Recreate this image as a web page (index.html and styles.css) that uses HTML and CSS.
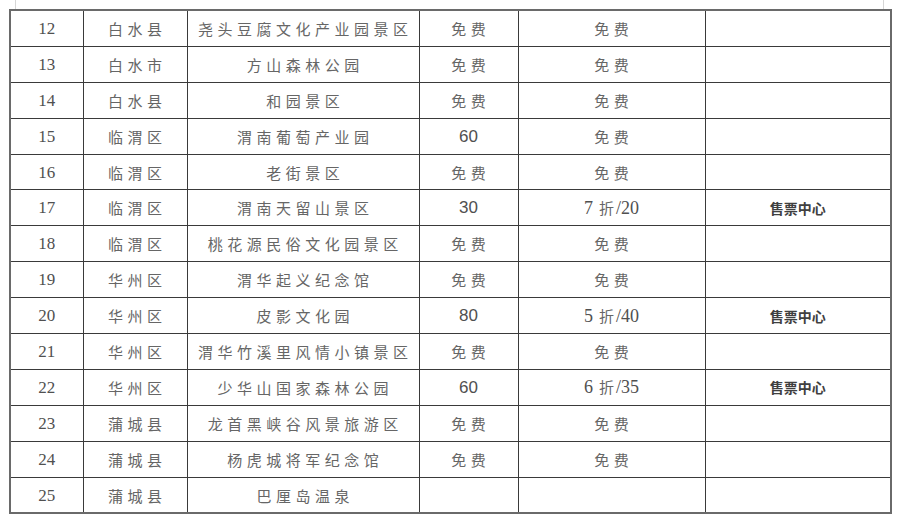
FILE: index.html
```html
<!DOCTYPE html>
<html lang="zh-CN">
<head>
<meta charset="utf-8">
<title>景区门票</title>
<link rel="stylesheet" href="styles.css">
</head>
<body>
<div class="page">
  <span class="mark mark-left"></span>
  <span class="mark mark-right"></span>
  <table class="sheet">
    <colgroup>
      <col class="c-no"><col class="c-area"><col class="c-name"><col class="c-price"><col class="c-disc"><col class="c-note">
    </colgroup>
    <tbody>
      <tr><td class="no">12</td><td class="cj">白水县</td><td class="cj">尧头豆腐文化产业园景区</td><td class="cj">免费</td><td class="cj">免费</td><td></td></tr>
      <tr><td class="no">13</td><td class="cj">白水市</td><td class="cj">方山森林公园</td><td class="cj">免费</td><td class="cj">免费</td><td></td></tr>
      <tr><td class="no">14</td><td class="cj">白水县</td><td class="cj">和园景区</td><td class="cj">免费</td><td class="cj">免费</td><td></td></tr>
      <tr><td class="no">15</td><td class="cj">临渭区</td><td class="cj">渭南葡萄产业园</td><td class="num">60</td><td class="cj">免费</td><td></td></tr>
      <tr><td class="no">16</td><td class="cj">临渭区</td><td class="cj">老街景区</td><td class="cj">免费</td><td class="cj">免费</td><td></td></tr>
      <tr><td class="no">17</td><td class="cj">临渭区</td><td class="cj">渭南天留山景区</td><td class="num">30</td><td class="disc">7<span class="zhe">折</span>/20</td><td class="note">售票中心</td></tr>
      <tr><td class="no">18</td><td class="cj">临渭区</td><td class="cj">桃花源民俗文化园景区</td><td class="cj">免费</td><td class="cj">免费</td><td></td></tr>
      <tr><td class="no">19</td><td class="cj">华州区</td><td class="cj">渭华起义纪念馆</td><td class="cj">免费</td><td class="cj">免费</td><td></td></tr>
      <tr><td class="no">20</td><td class="cj">华州区</td><td class="cj">皮影文化园</td><td class="num">80</td><td class="disc">5<span class="zhe">折</span>/40</td><td class="note">售票中心</td></tr>
      <tr><td class="no">21</td><td class="cj">华州区</td><td class="cj">渭华竹溪里风情小镇景区</td><td class="cj">免费</td><td class="cj">免费</td><td></td></tr>
      <tr><td class="no">22</td><td class="cj">华州区</td><td class="cj">少华山国家森林公园</td><td class="num">60</td><td class="disc">6<span class="zhe">折</span>/35</td><td class="note">售票中心</td></tr>
      <tr><td class="no">23</td><td class="cj">蒲城县</td><td class="cj">龙首黑峡谷风景旅游区</td><td class="cj">免费</td><td class="cj">免费</td><td></td></tr>
      <tr><td class="no">24</td><td class="cj">蒲城县</td><td class="cj">杨虎城将军纪念馆</td><td class="cj">免费</td><td class="cj">免费</td><td></td></tr>
      <tr><td class="no">25</td><td class="cj">蒲城县</td><td class="cj">巴厘岛温泉</td><td></td><td></td><td></td></tr>
    </tbody>
  </table>
</div>
</body>
</html>
```

FILE: styles.css
```css
html, body {
  margin: 0;
  padding: 0;
  background: #ffffff;
}

.page {
  position: relative;
  width: 900px;
  height: 522px;
  padding: 9px 0 0 9px;
  box-sizing: border-box;
}

.mark {
  position: absolute;
  top: 0;
  width: 1px;
  height: 9px;
  background: #d6d6d6;
}
.mark-left { left: 15px; }
.mark-right { left: 883px; }

.sheet {
  border-collapse: collapse;
  table-layout: fixed;
  width: 881px;
  border: 2px solid #6a6a6a;
  font-family: "Liberation Serif", "Noto Sans CJK SC", serif;
  color: #555555;
}

.c-no { width: 73px; }
.c-area { width: 104px; }
.c-name { width: 232px; }
.c-price { width: 99px; }
.c-disc { width: 187px; }
.c-note { width: 186px; }

.sheet td {
  height: 34.9px;
  padding: 0;
  border: 1px solid #3a3a3a;
  text-align: center;
  vertical-align: middle;
  white-space: nowrap;
  line-height: 1;
}

.no {
  font-size: 17px;
  color: #505050;
}

.cj {
  font-family: "Noto Sans CJK SC", sans-serif;
  font-weight: 400;
  font-size: 15px;
  letter-spacing: 4.5px;
  text-indent: 4.5px;
  color: #666666;
}

.num {
  font-family: "Liberation Sans", "Noto Sans CJK SC", sans-serif;
  font-size: 17px;
  color: #505050;
}

.disc {
  font-family: "Liberation Serif", "Noto Sans CJK SC", serif;
  font-size: 18px;
  color: #505050;
}

.zhe {
  font-family: "Noto Sans CJK SC", sans-serif;
  font-size: 15px;
  color: #666666;
  margin: 0 2px 0 6px;
}

.note {
  font-family: "Noto Sans CJK SC", sans-serif;
  font-weight: 700;
  font-size: 14px;
  color: #404040;
}
```
